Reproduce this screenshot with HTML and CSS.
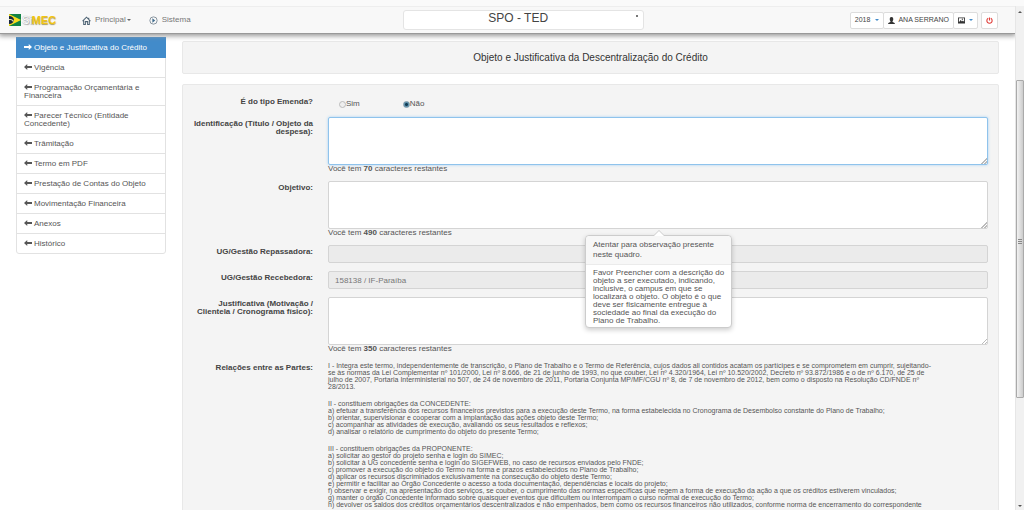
FILE: index.html
```html
<!DOCTYPE html>
<html lang="pt-BR">
<head>
<meta charset="utf-8">
<meta name="viewport" content="width=device-width, initial-scale=1">
<title>SIMEC - SPO - TED</title>
<link rel="stylesheet" href="styles.css">
</head>
<body>
<svg class="sprite" aria-hidden="true">
  <symbol id="arrow" viewBox="0 0 16 12"><path d="M0 6 6.500 0v4H16v4H6.500v4z"/></symbol>
</svg>
<div class="frame">
  <div class="view">
    <header class="navbar">
      <div class="brand">
        <a class="logo" href="#" aria-label="Simec">
          <svg class="logo-flag" viewBox="0 0 12 12" aria-hidden="true"><path fill="#118344" d="M0 0h12v12H0z"/><path fill="#f9dc1d" d="M0 0 12 6 0 12z"/><path fill="#17253d" d="M0 2c3 0 5 2 5 4s-2 4-5 4z"/><path fill="#e7e3a0" d="M0 5c2 0 3 0 5 2l-1 1C3 6 2 6 0 6z"/></svg>
          <span class="logo-text"><span class="logo-si">Si</span>MEC</span>
        </a>
        <nav class="nav">
          <a href="#"><svg viewBox="0 0 16 16" class="nav-icon" aria-hidden="true"><path d="M1 9 8 2l7 7M3 8v7h3v-5h4v5h3V8M12 3v3" fill="none" stroke="#4f6475" stroke-width="1.800"/></svg>Principal<span class="caret"></span></a>
          <a href="#"><svg viewBox="0 0 16 16" class="nav-icon" aria-hidden="true"><circle cx="8" cy="8" r="6.500" fill="none" stroke="#6d7c88" stroke-width="1.400"/><path d="M6 4l5 4-5 4z" fill="#3f6b8c"/></svg>Sistema</a>
        </nav>
      </div>
      <select class="module" aria-label="Módulo"><option>SPO - TED</option></select>
      <div class="tools">
        <div class="group">
          <button type="button">2018<span class="caret caret-blue"></span></button>
          <button type="button"><svg viewBox="0 0 16 16" class="tool-icon" aria-hidden="true"><path d="M8 0c3 0 4 2 4 5 0 2-1 4-2 5 0 2 6 2 6 6H0c0-4 6-4 6-6-1-1-2-3-2-5 0-3 1-5 4-5z"/></svg>ANA SERRANO</button>
          <button type="button" aria-label="Tema"><svg viewBox="0 0 16 14" class="tool-icon" aria-hidden="true"><path fill-rule="evenodd" d="M0 0h16v14H0zM2 2v9l4-5 3 3 2-2 3 3V2z"/><circle cx="10" cy="4" r="1.500"/></svg><span class="caret caret-blue"></span></button>
        </div>
        <button type="button" class="power" aria-label="Sair"><svg viewBox="0 0 16 16" class="power-icon" aria-hidden="true"><path d="M5 3a6 6 0 1 0 6 0M8 1v7" fill="none" stroke="#e0403c" stroke-width="2.600"/></svg></button>
      </div>
    </header>

    <div class="content">
      <nav class="menu">
        <a class="active" href="#"><svg class="arrow right"><use href="#arrow"/></svg>Objeto e Justificativa do Crédito</a>
        <a href="#"><svg class="arrow"><use href="#arrow"/></svg>Vigência</a>
        <a href="#"><svg class="arrow"><use href="#arrow"/></svg>Programação Orçamentária e Financeira</a>
        <a href="#"><svg class="arrow"><use href="#arrow"/></svg>Parecer Técnico (Entidade<br>Concedente)</a>
        <a href="#"><svg class="arrow"><use href="#arrow"/></svg>Trâmitação</a>
        <a href="#"><svg class="arrow"><use href="#arrow"/></svg>Termo em PDF</a>
        <a href="#"><svg class="arrow"><use href="#arrow"/></svg>Prestação de Contas do Objeto</a>
        <a href="#"><svg class="arrow"><use href="#arrow"/></svg>Movimentação Financeira</a>
        <a href="#"><svg class="arrow"><use href="#arrow"/></svg>Anexos</a>
        <a href="#"><svg class="arrow"><use href="#arrow"/></svg>Histórico</a>
      </nav>

      <main class="main">
        <h1 class="panel title">Objeto e Justificativa da Descentralização do Crédito</h1>
        <form class="panel form">
          <div class="row row-radio" role="radiogroup" aria-labelledby="emenda">
            <span class="label" id="emenda">É do tipo Emenda?</span>
            <div class="radios">
              <label><input type="radio" name="emenda">Sim</label>
              <label><input type="radio" name="emenda" checked>Não</label>
            </div>
          </div>
          <div class="row">
            <label class="label" for="ident">Identificação (Título / Objeto da<br>despesa):</label>
            <div class="field"><textarea id="ident" class="focused"></textarea><p class="help">Você tem <b>70</b> caracteres restantes</p></div>
          </div>
          <div class="row">
            <label class="label" for="objetivo">Objetivo:</label>
            <div class="field">
              <textarea id="objetivo"></textarea><p class="help">Você tem <b>490</b> caracteres restantes</p>
              <div class="popover" role="tooltip">
                <h2>Atentar para observação presente<br>neste quadro.</h2>
                <p>Favor Preencher com a descrição do<br>objeto a ser executado, indicando,<br>inclusive, o campus em que se<br>localizará o objeto. O objeto é o que<br>deve ser fisicamente entregue à<br>sociedade ao final da execução do<br>Plano de Trabalho.</p>
              </div>
            </div>
          </div>
          <div class="row">
            <label class="label" for="repassadora">UG/Gestão Repassadora:</label>
            <input id="repassadora" type="text" disabled>
          </div>
          <div class="row">
            <label class="label" for="recebedora">UG/Gestão Recebedora:</label>
            <input id="recebedora" type="text" value="158138 / IF-Paraíba" disabled>
          </div>
          <div class="row">
            <label class="label" for="just">Justificativa (Motivação /<br>Clientela / Cronograma físico):</label>
            <div class="field"><textarea id="just"></textarea><p class="help">Você tem <b>350</b> caracteres restantes</p></div>
          </div>
          <div class="row">
            <span class="label">Relações entre as Partes:</span>
            <div class="terms">
              <p>I - Integra este termo, independentemente de transcrição, o Plano de Trabalho e o Termo de Referência, cujos dados ali contidos acatam os partícipes e se comprometem em cumprir, sujeitando-<br>se às normas da Lei Complementar nº 101/2000, Lei nº 8.666, de 21 de junho de 1993, no que couber, Lei nº 4.320/1964, Lei nº 10.520/2002, Decreto nº 93.872/1986 e o de nº 6.170, de 25 de<br>julho de 2007, Portaria Interministerial no 507, de 24 de novembro de 2011, Portaria Conjunta MP/MF/CGU nº 8, de 7 de novembro de 2012, bem como o disposto na Resolução CD/FNDE nº<br>28/2013.</p>
              <p>II - constituem obrigações da CONCEDENTE:<br>a) efetuar a transferência dos recursos financeiros previstos para a execução deste Termo, na forma estabelecida no Cronograma de Desembolso constante do Plano de Trabalho;<br>b) orientar, supervisionar e cooperar com a implantação das ações objeto deste Termo;<br>c) acompanhar as atividades de execução, avaliando os seus resultados e reflexos;<br>d) analisar o relatório de cumprimento do objeto do presente Termo;</p>
              <p>III - constituem obrigações da PROPONENTE:<br>a) solicitar ao gestor do projeto senha e login do SIMEC;<br>b) solicitar à UG concedente senha e login do SIGEFWEB, no caso de recursos enviados pelo FNDE;<br>c) promover a execução do objeto do Termo na forma e prazos estabelecidos no Plano de Trabalho;<br>d) aplicar os recursos discriminados exclusivamente na consecução do objeto deste Termo;<br>e) permitir e facilitar ao Órgão Concedente o acesso a toda documentação, dependências e locais do projeto;<br>f) observar e exigir, na apresentação dos serviços, se couber, o cumprimento das normas específicas que regem a forma de execução da ação a que os créditos estiverem vinculados;<br>g) manter o órgão Concedente informado sobre quaisquer eventos que dificultem ou interrompam o curso normal de execução do Termo;<br>h) devolver os saldos dos créditos orçamentários descentralizados e não empenhados, bem como os recursos financeiros não utilizados, conforme norma de encerramento do correspondente</p>
            </div>
          </div>
        </form>
      </main>
    </div>
  </div>
  <div class="scrollbar" aria-hidden="true"><span class="up"></span><span class="thumb"></span><span class="down"></span></div>
</div>
</body>
</html>
```
FILE: styles.css
```css
* { box-sizing: border-box; }
body {
  margin: 0;
  height: 100vh;
  overflow: hidden;
  background: #fff;
  color: #555;
  font: 8px/8px "Liberation Sans", Arial, sans-serif;
}
p, h1, h2 { margin: 0; }
a { color: inherit; text-decoration: none; }
button, input, textarea, select { font: inherit; color: inherit; margin: 0; }
.sprite { display: none; }

.frame { display: flex; height: 100%; border-top: 6px solid #fafafa; }
.view { flex: 1; min-width: 0; overflow: hidden; }

.navbar {
  position: relative;
  z-index: 2;
  display: grid;
  grid-template-columns: 10fr 241px 9fr;
  align-items: center;
  height: 28px;
  padding: 0 17px 0 9px;
  background: #f8f8f8;
  border-top: 1px solid #eee;
  border-bottom: 1px solid #999;
  box-shadow: 0 1px 5px 1px #999;
}
.brand { display: flex; align-items: center; }
.logo { display: flex; align-items: center; gap: 1px; width: 73px; }
.logo-flag { width: 12px; height: 12px; }
.logo-text { font: bold 11px/12px "Liberation Sans", Arial, sans-serif; color: #f3c512; text-shadow: 0 1px 1px #a89a5a; }
.logo-si { font-weight: normal; color: #fff; text-shadow: 0 0 1px #888, 1px 1px 1px #aaa; }
.nav { display: flex; gap: 18px; color: #777; }
.nav a { display: flex; align-items: center; }
.nav-icon { width: 9px; height: 9px; margin-right: 4px; }
.caret { border: 2px solid transparent; border-top-color: #666; border-bottom: 0; margin-left: 1px; }
.caret-blue { border-top-color: #428bca; margin-left: 5px; }
.module {
  width: 100%;
  height: 20px;
  padding: 0 10px 4px 0;
  appearance: none;
  border: 1px solid #e4e4e4;
  border-radius: 3px;
  background: #fff linear-gradient(#777, #777) no-repeat right 5px top 4px / 2px 2px;
  color: #444;
  font-size: 12px;
  line-height: 14px;
  text-align: center;
  text-align-last: center;
}
.tools { display: flex; justify-content: flex-end; gap: 3px; }
.tools button {
  display: flex;
  align-items: center;
  height: 17px;
  padding: 0 4px;
  background: #fff;
  border: 1px solid #ddd;
  border-radius: 2px;
  color: #444;
  font-size: 7px;
}
.group { display: flex; }
.group button + button { margin-left: -1px; }
.tool-icon { width: 7px; height: 7px; margin-right: 3px; fill: #333; }
.tool-icon + .caret { margin-left: 1px; }
.power-icon { width: 7px; height: 7px; }

.content { display: grid; grid-template-columns: 150px 1fr; gap: 16px; padding: 3px 16px 0; }
.menu { align-self: start; border: 1px solid #e2e2e2; border-radius: 0 0 3px 3px; }
.menu a { display: block; padding: 6px 7px 5px; border-bottom: 1px solid #e2e2e2; line-height: 8px; }
.menu a:last-child { border-bottom: 0; }
.menu .active { margin: -1px -1px 0; padding: 7px 8px 5px; background: #428bca; border-color: #428bca; color: #fff; }
.arrow { width: 8px; height: 6px; margin-right: 2px; fill: currentColor; }
.arrow.right { transform: rotate(180deg); }

.main { padding-top: 4px; }
.panel { background: #f4f4f4; border: 1px solid #e8e8e8; border-radius: 2px; }
.title { margin-bottom: 10px; padding: 10px; font-size: 10px; line-height: 11px; font-weight: normal; text-align: center; color: #333; }
.form { display: flex; flex-direction: column; gap: 8px; padding: 10px; }
.row { display: grid; grid-template-columns: 120px 1fr; column-gap: 15px; }
.row-radio { min-height: 14px; }
.label { padding-top: 3px; font-weight: bold; text-align: right; color: #444; white-space: nowrap; justify-self: end; }
.radios { display: flex; gap: 43px; padding: 5px 11px 0; }
.radios label { display: flex; align-items: center; height: 8px; }
.radios input {
  appearance: none;
  width: 7px;
  height: 7px;
  border: 1px solid #bbb;
  border-radius: 50%;
  background: #eee;
}
.radios input:checked { border-color: #7f99a8; background: radial-gradient(#123c54 0 1px, #5b91ad 2px); }
.field { position: relative; }
textarea, input[type="text"] {
  display: block;
  width: 100%;
  border: 1px solid #d4d4d4;
  border-radius: 2px;
  background: #fff;
  padding: 4px 6px;
}
textarea { height: 48px; }
textarea::-webkit-resizer { background: linear-gradient(135deg, transparent 80%, #bbb 80% 84%, transparent 84% 90%, #bbb 90% 94%, transparent 94%); }
textarea.focused { border-color: #8fc3ec; box-shadow: 0 0 3px #a5d0f3; }
input[type="text"] { height: 18px; }
input:disabled { background: #ebebeb; color: #777; }
.terms { display: flex; flex-direction: column; gap: 10px; padding-top: 1px; font-size: 7px; line-height: 7px; white-space: nowrap; }

.popover {
  position: absolute;
  z-index: 1;
  top: 54px;
  left: 50%;
  width: 147px;
  margin-left: -73px;
  background: #fff;
  border: 1px solid #ccc;
  border-radius: 4px;
  box-shadow: 0 2px 5px rgba(0, 0, 0, .2);
  white-space: nowrap;
}
.popover::before {
  content: "";
  position: absolute;
  top: -5px;
  left: 68px;
  border: 5px solid transparent;
  border-top: 0;
  border-bottom-color: #fff;
  filter: drop-shadow(0 -1px 0 #ccc);
}
.popover h2 { padding: 4px 7px; background: #f7f7f7; border-bottom: 1px solid #ebebeb; border-radius: 4px 4px 0 0; font-size: 8px; line-height: 10px; font-weight: normal; }
.popover p { padding: 4px 7px 2px; }

.scrollbar { position: relative; width: 9px; display: flex; flex-direction: column; align-items: center; justify-content: space-between; padding: 5px 0 3px; background: #f1f1f1; border-left: 1px solid #e6e6e6; }
.up, .down { border: 2px solid transparent; }
.up { border-top: 0; border-bottom-color: #555; }
.down { border-bottom: 0; border-top-color: #555; }
.thumb { position: absolute; top: 74px; left: 0; right: 0; height: 63%; border: 1px solid #aaa; border-radius: 1px; background: linear-gradient(90deg, #f2f2f2, #ccc); }
.thumb::after { content: ""; position: absolute; top: 50%; left: 1px; width: 4px; height: 5px; background: repeating-linear-gradient(#888 0 1px, transparent 1px 2px); }
```
